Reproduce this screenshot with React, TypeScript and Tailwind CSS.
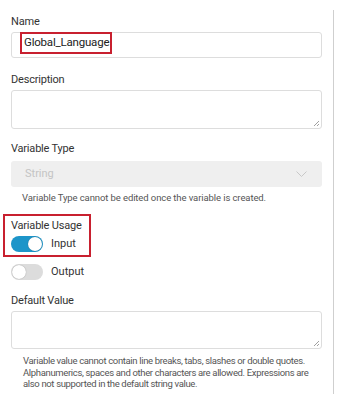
import React from "react";

function Toggle({ on }: { on: boolean }) {
  return (
    <div
      className={
        "relative w-[32px] h-[16px] rounded-full " +
        (on ? "bg-[#1d95c9]" : "bg-[#dcdcdc]")
      }
    >
      <div
        className={
          "absolute top-[1px] w-[14px] h-[14px] rounded-full bg-white shadow-[0_0_1px_rgba(0,0,0,0.4)] " +
          (on ? "left-[17px]" : "left-[1px]")
        }
      />
    </div>
  );
}

function Grip() {
  return (
    <svg className="absolute right-[2px] bottom-[2px]" width="6" height="6" viewBox="0 0 6 6">
      <path d="M1 6 L6 1 M4 6 L6 4" stroke="#888" strokeWidth="0.8" />
    </svg>
  );
}

export default function App() {
  return (
    <div className="relative w-[337px] h-[400px] bg-white overflow-hidden font-['Roboto',sans-serif] text-[#333]">
      <div className="absolute right-[3px] top-[10px] bottom-[6px] w-[1px] bg-[#cfcfcf]" />
      <div className="flex flex-col pl-[11px] pr-[15px] pt-[15px]">
        <div className="text-[11px] tracking-[-0.2px] leading-[14px]">Name</div>
        <div className="mt-[3px] h-[26px] border border-[#ddd] rounded-[3px] flex items-start pl-[8px]">
          <span className="-mt-[1px] border-2 border-[#c8202f] pl-[2px] pr-[1px] h-[22px] flex items-center text-[11.5px] tracking-[-0.2px] text-[#222]">
            Global_Language
          </span>
        </div>

        <div className="mt-[15px] text-[11px] tracking-[-0.2px] leading-[14px]">Description</div>
        <div className="relative mt-[3px] h-[39px] border border-[#ddd] rounded-[3px]">
          <Grip />
        </div>

        <div className="mt-[13px] text-[11px] tracking-[-0.2px] leading-[14px]">Variable Type</div>
        <div className="mt-[5px] h-[26px] bg-[#efefef] rounded-[3px] flex items-center justify-between pl-[14px] pr-[15px]">
          <span className="text-[11px] text-[#c4c4c4]">String</span>
          <svg width="11" height="7" viewBox="0 0 11 7">
            <path d="M0.5 0.5 L5.5 5.5 L10.5 0.5" fill="none" stroke="#c8c8c8" strokeWidth="1" />
          </svg>
        </div>
        <div className="mt-[5px] pl-[11px] text-[9.5px] tracking-[-0.1px] leading-[12px] text-[#555]">
          Variable Type cannot be edited once the variable is created.
        </div>

        <div className="mt-[10px] -ml-[8px] w-[88px] border-2 border-[#c8202f] pl-[6px] pt-[3px] pb-[2px]">
          <div className="text-[11px] tracking-[-0.2px] leading-[14px]">Variable Usage</div>
          <div className="mt-[3px] flex items-center gap-[8px]">
            <Toggle on />
            <span className="text-[11px]">Input</span>
          </div>
        </div>
        <div className="mt-[7px] flex items-center gap-[8px]">
          <Toggle on={false} />
          <span className="text-[11px]">Output</span>
        </div>

        <div className="mt-[14px] text-[11px] tracking-[-0.2px] leading-[14px]">Default Value</div>
        <div className="relative mt-[3px] h-[38px] border border-[#ddd] rounded-[3px]">
          <Grip />
        </div>
        <div className="mt-[6px] pl-[12px] text-[9.5px] tracking-[-0.35px] leading-[11.7px] text-[#555]">
          Variable value cannot contain line breaks, tabs, slashes or double quotes.
          Alphanumerics, spaces and other characters are allowed. Expressions are
          also not supported in the default string value.
        </div>
      </div>
    </div>
  );
}
